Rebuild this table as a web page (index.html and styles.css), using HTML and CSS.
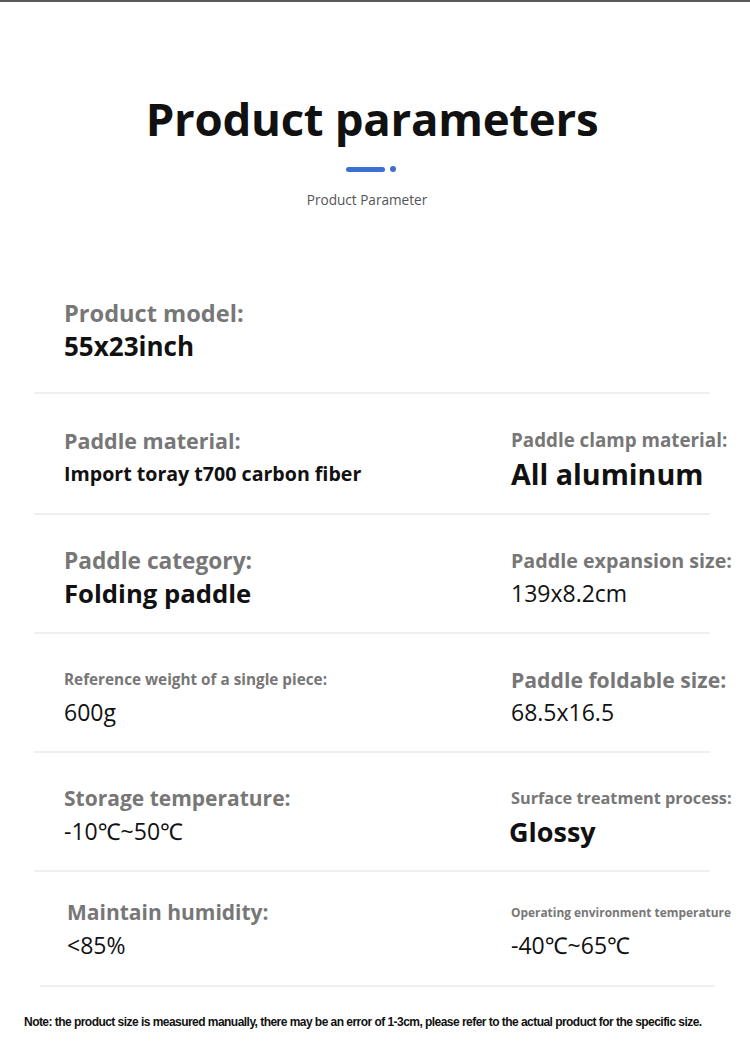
FILE: index.html
```html
<!DOCTYPE html>
<html lang="en">
<head>
<meta charset="utf-8">
<title>Product parameters</title>
<link rel="stylesheet" href="styles.css">
</head>
<body>
<div class="page">
  <header class="head">
    <h1 class="title">Product parameters</h1>
    <div class="accent"><span class="bar"></span><span class="dot"></span></div>
    <p class="subtitle">Product Parameter</p>
  </header>

  <section class="params">
    <div class="row first">
      <div class="cell left">
        <div class="label l23">Product model:</div>
        <div class="value b26">55x23inch</div>
      </div>
      <div class="cell right"></div>
    </div>
    <div class="row tall">
      <div class="cell left">
        <div class="label l215">Paddle material:</div>
        <div class="value b196">Import toray t700 carbon fiber</div>
      </div>
      <div class="cell right">
        <div class="label l188">Paddle clamp material:</div>
        <div class="value b287">All aluminum</div>
      </div>
    </div>
    <div class="row">
      <div class="cell left">
        <div class="label l227">Paddle category:</div>
        <div class="value b257">Folding paddle</div>
      </div>
      <div class="cell right">
        <div class="label l197">Paddle expansion size:</div>
        <div class="value r23">139x8.2cm</div>
      </div>
    </div>
    <div class="row">
      <div class="cell left">
        <div class="label l153">Reference weight of a single piece:</div>
        <div class="value r23">600g</div>
      </div>
      <div class="cell right">
        <div class="label l212">Paddle foldable size:</div>
        <div class="value r23">68.5x16.5</div>
      </div>
    </div>
    <div class="row">
      <div class="cell left">
        <div class="label l21">Storage temperature:</div>
        <div class="value r23">-10℃~50℃</div>
      </div>
      <div class="cell right">
        <div class="label l163">Surface treatment process:</div>
        <div class="value b27 shift">Glossy</div>
      </div>
    </div>
    <div class="row last">
      <div class="cell left">
        <div class="label l21">Maintain humidity:</div>
        <div class="value r23">&lt;85%</div>
      </div>
      <div class="cell right">
        <div class="label l12">Operating environment temperature</div>
        <div class="value r23">-40℃~65℃</div>
      </div>
    </div>
  </section>

  <p class="note">Note: the product size is measured manually, there may be an error of 1-3cm, please refer to the actual product for the specific size.</p>
</div>
</body>
</html>
```

FILE: styles.css
```css
* { box-sizing: border-box; }
html, body { margin: 0; padding: 0; background: #fff; }
body {
  font-family: "Open Sans", "Noto Sans", sans-serif;
  color: #111;
}
.page {
  width: 750px;
  min-height: 1055px;
  border-top: 2px solid #5a5a5a;
}
.head {
  display: flex;
  flex-direction: column;
  align-items: center;
  padding-top: 88px;
}
.title {
  margin: 0 6px 0 0;
  font-size: 45.6px;
  line-height: 56px;
  font-weight: 700;
  color: #111;
  letter-spacing: -0.3px;
}
.accent {
  margin-top: 20px;
  display: flex;
  align-items: center;
  gap: 5px;
  height: 6px;
  margin-left: -8px;
}
.bar {
  display: block;
  width: 39px;
  height: 5px;
  border-radius: 3px;
  background: #3b6fd1;
}
.dot {
  display: block;
  width: 6px;
  height: 6px;
  border-radius: 50%;
  background: #3b6fd1;
}
.subtitle {
  margin: 20px 16px 0 0;
  font-size: 13.6px;
  line-height: 16px;
  color: #555;
  font-weight: 400;
}
.params {
  margin: 88px 40px 0 34px;
}
.row {
  display: grid;
  grid-template-columns: 477px 1fr;
  border-bottom: 2px solid #efefef;
  height: 119px;
  padding-top: 28px;
}
.row.first {
  height: 98px;
  padding-top: 0;
}
.row.tall {
  height: 121px;
  padding-top: 29px;
}
.row.last {
  height: 115px;
  padding-top: 23px;
  margin-left: 6px;
  margin-right: -5px;
  grid-template-columns: 471px 1fr;
}
.cell.left { padding-left: 30px; }
.row.last .cell.left { padding-left: 27px; }
.label {
  height: 34px;
  display: flex;
  align-items: center;
  font-weight: 700;
  color: #777;
  white-space: nowrap;
}
.value {
  height: 32px;
  display: flex;
  align-items: center;
  white-space: nowrap;
  color: #111;
}
.l23 { font-size: 23.6px; }
.l227 { font-size: 22.7px; }
.l215 { font-size: 21.5px; }
.l212 { font-size: 21.2px; }
.l21 { font-size: 21px; }
.l197 { font-size: 19.7px; }
.l188 { font-size: 18.8px; }
.l163 { font-size: 16.3px; }
.l153 { font-size: 15.3px; }
.l12 { font-size: 11.9px; }
.b287 { font-size: 28.7px; font-weight: 700; }
.b27 { font-size: 27px; font-weight: 700; }
.b26 { font-size: 26px; font-weight: 700; }
.b257 { font-size: 25.7px; font-weight: 700; }
.b196 { font-size: 19.6px; font-weight: 700; }
.r23 { font-size: 23px; font-weight: 400; }
.shift { margin-left: -2px; }
.note {
  margin: 28px 0 0 24px;
  font-family: "Liberation Sans", Arial, sans-serif;
  font-size: 12px;
  font-weight: 700;
  letter-spacing: -0.54px;
  color: #111;
  white-space: nowrap;
}
```
